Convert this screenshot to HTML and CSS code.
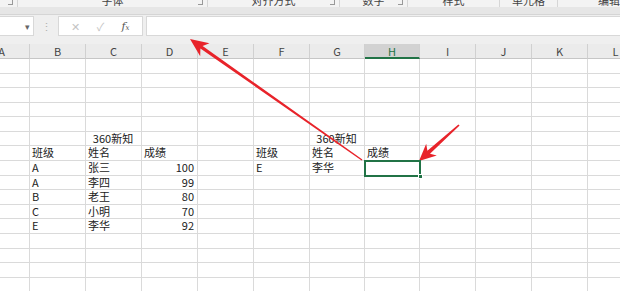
FILE: index.html
```html
<!DOCTYPE html>
<html lang="zh-CN">
<head>
  <meta charset="UTF-8" />
  <title>360新知</title>
  <link rel="stylesheet" href="styles.css">
</head>
<body>
  <div class="ribbon-tail">
    <div class="group" style="width:18px"><span class="launcher"></span></div>
    <div class="group" style="width:190px"><span class="label">字体</span><span class="launcher"></span></div>
    <div class="group" style="width:132px"><span class="label">对齐方式</span><span class="launcher"></span></div>
    <div class="group" style="width:68px"><span class="label">数字</span><span class="launcher"></span></div>
    <div class="group" style="width:92px"><span class="label">样式</span></div>
    <div class="group" style="width:58px"><span class="label">单元格</span></div>
    <div class="group last"><span class="label">编辑</span></div>
  </div>
  <div class="ribbon-band"></div>

  <div class="formula-bar">
    <div class="name-box"><span class="caret">▾</span></div>
    <div class="grip">⋮</div>
    <div class="fx-box">
      <span class="fx-btn">✕</span>
      <span class="fx-btn">✓</span>
      <span class="fx-btn fx">f<small>x</small></span>
    </div>
    <div class="formula-input"></div>
  </div>

  <div class="sheet" id="sheet"></div>

  <svg class="arrows" width="620" height="291" viewBox="0 0 620 291">
    <polygon points="190,39 209.5,43.2 202.6,46 362.4,159.5 361.6,160.5 200.4,48.4 200.2,56.2" />
    <polygon points="419,161 436.8,155.4 430,153.8 459.6,125.6 458.4,124.4 427.4,150.8 426.2,143.8" />
  </svg>

  <script>
    const cols = ['A','B','C','D','E','F','G','H','I','J','K','L'];
    const rows = [15,14,15,14,15,14,15,15,14,15,14,15,15,14,15,14];
    const data = {
      6:  { C: '360新知', G: '360新知' },
      7:  { B: '班级', C: '姓名', D: '成绩', F: '班级', G: '姓名', H: '成绩' },
      8:  { B: 'A', C: '张三', D: 100, F: 'E', G: '李华' },
      9:  { B: 'A', C: '李四', D: 99 },
      10: { B: 'B', C: '老王', D: 80 },
      11: { B: 'C', C: '小明', D: 70 },
      12: { B: 'E', C: '李华', D: 92 }
    };
    const titles = ['C6', 'G6'];

    const sheet = document.getElementById('sheet');
    sheet.style.gridTemplateRows = '15px ' + rows.map(h => h + 'px').join(' ');

    cols.forEach(c => {
      const h = document.createElement('div');
      h.className = 'col-head' + (c === 'H' ? ' active' : '');
      h.textContent = c;
      sheet.appendChild(h);
    });

    rows.forEach((_, i) => {
      const r = i + 1;
      cols.forEach(c => {
        const cell = document.createElement('div');
        cell.className = 'cell';
        const v = data[r] && data[r][c];
        if (v !== undefined) {
          cell.textContent = v;
          if (typeof v === 'number') cell.classList.add('num');
        }
        if (titles.includes(c + r)) cell.classList.add('center');
        if (c + r === 'H8') {
          cell.classList.add('selected');
          const handle = document.createElement('span');
          handle.className = 'fill-handle';
          cell.appendChild(handle);
        }
        sheet.appendChild(cell);
      });
    });
  </script>
</body>
</html>
```

FILE: styles.css
```css
* {
  box-sizing: border-box;
}
body {
  margin: 0;
  width: 620px;
  height: 291px;
  overflow: hidden;
  position: relative;
  background: #fff;
  font-family: "Noto Sans CJK SC", "Noto Sans", sans-serif;
  color: #222;
}
.ribbon-tail {
  display: flex;
  height: 7px;
  overflow: hidden;
  background: #f3f3f3;
}
.group {
  flex: none;
  display: flex;
  justify-content: center;
  position: relative;
  border-right: 1px solid #d6d6d6;
  height: 7px;
}
.group.last {
  flex: 1;
  border-right: none;
  justify-content: flex-end;
}
.group .label {
  font-size: 11px;
  line-height: 12px;
  margin-top: -6px;
  color: #444;
  white-space: nowrap;
}
.launcher {
  position: absolute;
  right: 4px;
  top: 0;
  width: 5px;
  height: 5px;
  border-right: 1px solid #999;
  border-bottom: 1px solid #999;
}
.ribbon-band {
  height: 8px;
  background: #e6e6e6;
  border-bottom: 1px solid #d5d5d5;
}
.formula-bar {
  display: flex;
  align-items: flex-start;
  height: 29px;
  padding-top: 1px;
  background: #efefef;
}
.name-box {
  width: 34px;
  height: 20px;
  background: #fff;
  border: 1px solid #d8d8d8;
  border-left: none;
  display: flex;
  justify-content: flex-end;
  align-items: center;
  padding-right: 3px;
}
.caret {
  font-size: 9px;
  color: #666;
  line-height: 1;
}
.grip {
  width: 24px;
  height: 20px;
  text-align: center;
  font-size: 11px;
  line-height: 20px;
  color: #b0b0b0;
}
.fx-box {
  width: 85px;
  height: 20px;
  background: #fff;
  border: 1px solid #d8d8d8;
  display: flex;
  align-items: center;
  justify-content: space-around;
  padding: 0 4px;
}
.fx-btn {
  font-size: 11px;
  color: #c4c4c4;
  width: 20px;
  text-align: center;
}
.fx {
  font-family: "DejaVu Serif", serif;
  font-style: italic;
  color: #555;
  font-size: 11px;
}
.fx small {
  font-size: 7px;
}
.formula-input {
  flex: 1;
  margin-left: 3px;
  height: 20px;
  background: #fff;
  border: 1px solid #d8d8d8;
  border-right: none;
}
.sheet {
  display: grid;
  grid-template-columns: 56px 56px 56px 56px 56px 56px 55px 55px 56px 56px 56px 56px;
  margin-left: -26px;
  font-size: 11px;
}
.col-head {
  background: #ebebeb;
  border-right: 1px solid #d0d0d0;
  border-bottom: 1px solid #c6c6c6;
  text-align: center;
  line-height: 14px;
  color: #444;
}
.col-head.active {
  background: #d2d2d2;
  border-bottom: 2px solid #217346;
  color: #217346;
}
.cell {
  position: relative;
  border-right: 1px solid #dadada;
  border-bottom: 1px solid #dadada;
  padding: 0 3px 0 2px;
  line-height: 13px;
  white-space: nowrap;
  color: #222;
}
.cell.num {
  text-align: right;
}
.cell.center {
  text-align: center;
}
.cell.selected {
  outline: 2px solid #217346;
  outline-offset: -1px;
  z-index: 1;
}
.fill-handle {
  position: absolute;
  right: -4px;
  bottom: -4px;
  width: 5px;
  height: 5px;
  background: #217346;
  border: 1px solid #fff;
}
.arrows {
  position: absolute;
  left: 0;
  top: 0;
  pointer-events: none;
}
.arrows polygon {
  fill: #e8232a;
}
```
